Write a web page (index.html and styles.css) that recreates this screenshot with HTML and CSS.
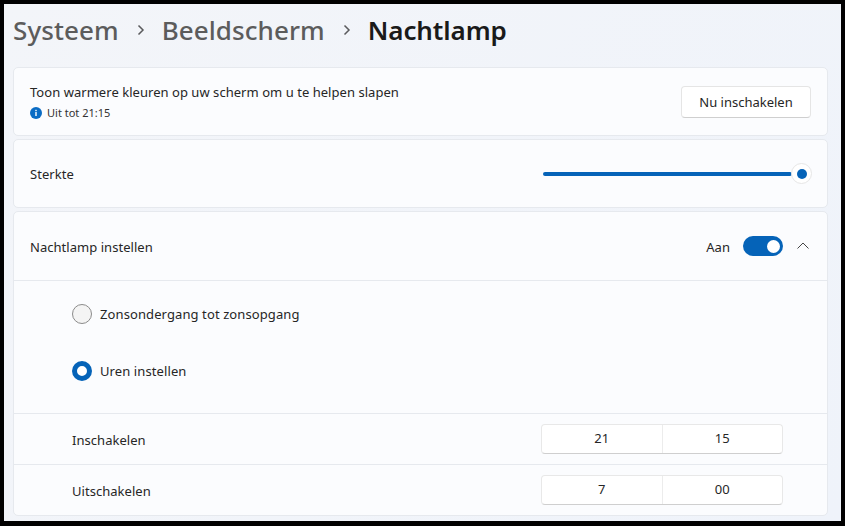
FILE: index.html
```html
<!DOCTYPE html>
<html lang="nl">
<head>
  <meta charset="UTF-8">
  <title>Nachtlamp</title>
  <link rel="stylesheet" href="styles.css">
</head>
<body>
<div class="window">
  <h1 class="crumbs">
    <span class="crumb">Systeem</span>
    <svg class="crumb-sep" width="10" height="12" viewBox="0 0 10 12"><path d="M2.5 1.5 7 6 2.5 10.5" fill="none" stroke="#5a5b5d" stroke-width="1.5"/></svg>
    <span class="crumb">Beeldscherm</span>
    <svg class="crumb-sep" width="10" height="12" viewBox="0 0 10 12"><path d="M2.5 1.5 7 6 2.5 10.5" fill="none" stroke="#5a5b5d" stroke-width="1.5"/></svg>
    <span class="crumb current">Nachtlamp</span>
  </h1>

  <div class="card row first">
    <div>
      <div class="label">Toon warmere kleuren op uw scherm om u te helpen slapen</div>
      <div class="status">
        <svg width="12" height="12" viewBox="0 0 12 12"><circle cx="6" cy="6" r="6" fill="#0a6cc4"/><rect x="5.3" y="5" width="1.4" height="4" fill="#fff"/><rect x="5.3" y="2.8" width="1.4" height="1.4" fill="#fff"/></svg>
        <span>Uit tot 21:15</span>
      </div>
    </div>
    <button class="btn">Nu inschakelen</button>
  </div>

  <div class="card row second">
    <div class="label">Sterkte</div>
    <div class="slider">
      <div class="slider-track"></div>
      <div class="slider-thumb"><div class="slider-dot"></div></div>
    </div>
  </div>

  <div class="card third">
    <div class="row head">
      <div class="label">Nachtlamp instellen</div>
      <div class="head-right">
        <span class="label">Aan</span>
        <div class="toggle"><div class="toggle-knob"></div></div>
        <svg class="chevron" width="14" height="10" viewBox="0 0 14 10"><path d="M1.500 7.500 7 2l5.500 5.500" fill="none" stroke="#444" stroke-width="1"/></svg>
      </div>
    </div>
    <div class="options">
      <div class="option"><div class="radio"></div><span class="label">Zonsondergang tot zonsopgang</span></div>
      <div class="option"><div class="radio on"></div><span class="label">Uren instellen</span></div>
    </div>
    <div class="time-row">
      <div class="label">Inschakelen</div>
      <div class="time"><div class="time-cell">21</div><div class="time-cell">15</div></div>
    </div>
    <div class="time-row">
      <div class="label">Uitschakelen</div>
      <div class="time"><div class="time-cell">7</div><div class="time-cell">00</div></div>
    </div>
  </div>
</div>
</body>
</html>
```
FILE: styles.css
```css
html, body {
  margin: 0;
  padding: 0;
}

body {
  font-family: "Noto Sans", "Open Sans", Arial, sans-serif;
  color: #1b1b1b;
  background-color: #000;
  width: 845px;
  height: 526px;
  overflow: hidden;
}

.window {
  box-sizing: border-box;
  width: 837px;
  height: 517px;
  margin: 4px 0 0 4px;
  padding: 0 13px 0 9px;
  background: linear-gradient(120deg, #f3f5f9, #eff3fa);
  overflow: hidden;
}

.crumbs {
  display: flex;
  align-items: center;
  height: 51px;
  margin: 0 0 12px;
  font-size: 26px;
  font-weight: 500;
  color: #5c5c5c;
}

.crumb {
  letter-spacing: 0.08px;
}

.crumb-sep {
  margin: 0 16px 0 17px;
}

.crumb.current {
  color: #1a1a1a;
  font-weight: 600;
  letter-spacing: -0.1px;
}

.card {
  background-color: #fbfcfe;
  border: 1px solid #e6e9ee;
  border-radius: 5px;
  box-sizing: border-box;
  margin-bottom: 3px;
}

.row {
  display: flex;
  align-items: center;
  justify-content: space-between;
}

.first {
  height: 69px;
  padding: 0 16px 0 16px;
}

.second {
  height: 69px;
  padding: 0 15px 0 16px;
}

.third {
  height: 305px;
}

.label {
  font-size: 13px;
  letter-spacing: 0.04px;
  color: #262626;
}

.status {
  display: flex;
  align-items: center;
  gap: 5px;
  margin-top: 4px;
  font-size: 11px;
  color: #333;
}

.btn {
  width: 130px;
  height: 32px;
  background-color: #fff;
  border: 1px solid #e5e5e5;
  border-bottom-color: #cfcfcf;
  border-radius: 4px;
  font-family: inherit;
  font-size: 13px;
  color: #262626;
  padding: 0;
}

.slider {
  display: flex;
  align-items: center;
  width: 269px;
}

.slider-track {
  flex: 1;
  height: 4px;
  margin-right: -1px;
  border-radius: 2px;
  background-color: #0563b8;
}

.slider-thumb {
  display: flex;
  align-items: center;
  justify-content: center;
  box-sizing: border-box;
  width: 21px;
  height: 21px;
  border: 1px solid #e6e6e6;
  border-radius: 50%;
  background-color: #fff;
}

.slider-dot {
  width: 10px;
  height: 10px;
  border-radius: 50%;
  background-color: #0563b8;
}

.head {
  height: 68px;
  padding: 0 17px 0 16px;
  border-bottom: 1px solid #e6e9ee;
}

.head .label {
  margin-top: 2px;
}

.head-right {
  display: flex;
  align-items: center;
}

.toggle {
  display: flex;
  align-items: center;
  justify-content: flex-end;
  box-sizing: border-box;
  width: 40px;
  height: 20px;
  margin-left: 13px;
  padding-right: 3px;
  border-radius: 10px;
  background-color: #0563b8;
}

.toggle-knob {
  width: 13px;
  height: 13px;
  border-radius: 50%;
  background-color: #fff;
}

.chevron {
  margin-left: 13px;
}

.options {
  box-sizing: border-box;
  height: 133px;
  padding: 4px 0 0 58px;
  border-bottom: 1px solid #e6e9ee;
}

.option {
  display: flex;
  align-items: center;
  gap: 8px;
  height: 57px;
}

.option .label {
  letter-spacing: 0.1px;
}

.radio {
  box-sizing: border-box;
  width: 20px;
  height: 20px;
  border: 1px solid #8b8b8b;
  border-radius: 50%;
  background-color: #f4f4f4;
}

.radio.on {
  border: 5px solid #0563b8;
  background-color: #fff;
}

.time-row {
  display: flex;
  align-items: center;
  justify-content: space-between;
  height: 50px;
  padding: 0 44px 0 58px;
  border-bottom: 1px solid #e6e9ee;
}

.time-row .label {
  margin-top: 2px;
}

.time-row:last-child {
  border-bottom: none;
}

.time {
  display: flex;
  width: 242px;
  height: 30px;
  background-color: #fff;
  border: 1px solid #e8e8e8;
  border-bottom-color: #cfcfcf;
  border-radius: 4px;
  box-sizing: border-box;
}

.time-cell {
  flex: 1;
  display: flex;
  align-items: center;
  justify-content: center;
  padding-bottom: 2px;
  font-size: 13px;
  color: #262626;
}

.time-cell + .time-cell {
  border-left: 1px solid #ececec;
}
```
